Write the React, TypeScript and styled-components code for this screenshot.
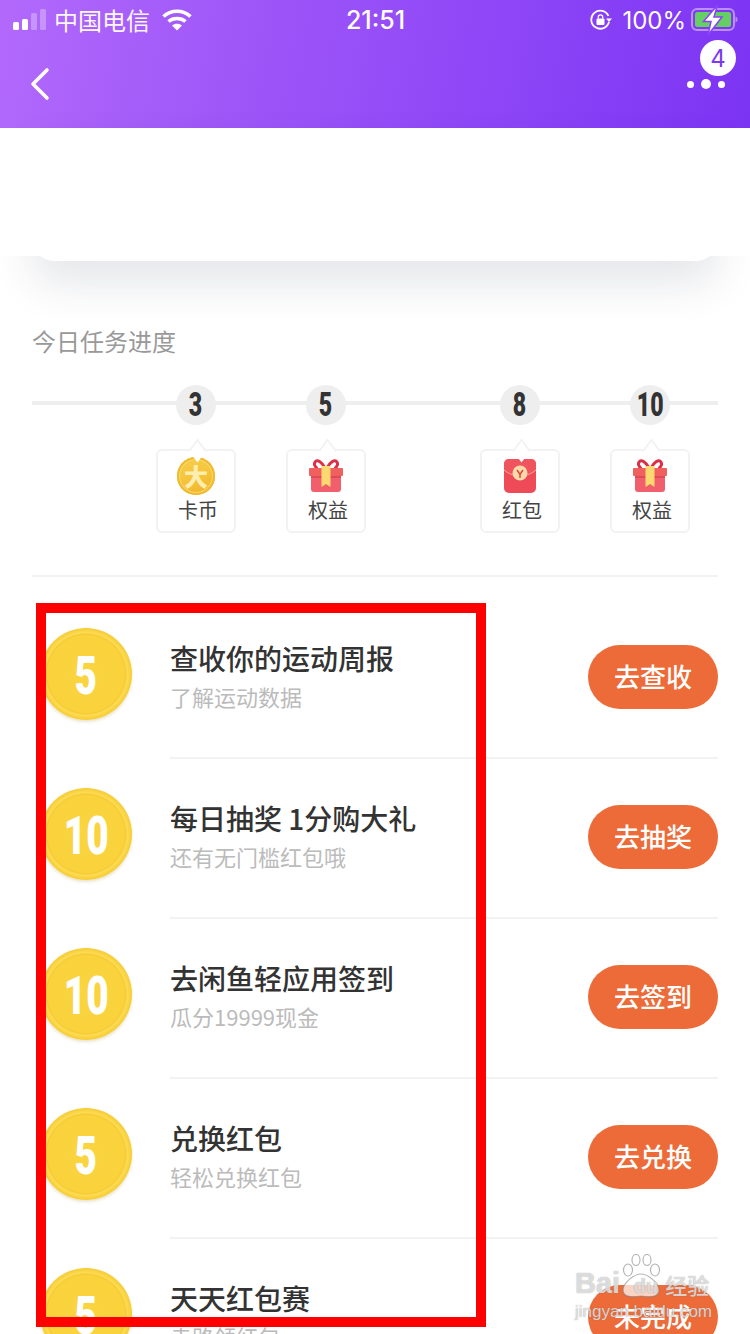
import React from 'react';
import styled, { createGlobalStyle } from 'styled-components';

interface Milestone {
    count: number;
    label: string;
    kind: 'coin' | 'gift' | 'packet';
    offset: number;
}

interface Task {
    points: number;
    title: string;
    desc: string;
    action: string;
}

const milestones: Milestone[] = [
    { count: 3, label: '卡币', kind: 'coin', offset: 124 },
    { count: 5, label: '权益', kind: 'gift', offset: 50 },
    { count: 8, label: '红包', kind: 'packet', offset: 114 },
    { count: 10, label: '权益', kind: 'gift', offset: 50 },
];

const tasks: Task[] = [
    { points: 5, title: '查收你的运动周报', desc: '了解运动数据', action: '去查收' },
    { points: 10, title: '每日抽奖 1分购大礼', desc: '还有无门槛红包哦', action: '去抽奖' },
    { points: 10, title: '去闲鱼轻应用签到', desc: '瓜分19999现金', action: '去签到' },
    { points: 5, title: '兑换红包', desc: '轻松兑换红包', action: '去兑换' },
    { points: 5, title: '天天红包赛', desc: '走路领红包', action: '未完成' },
];

const GlobalStyle = createGlobalStyle`
    html, body {
        margin: 0;
        padding: 0;
        background: #fff;
    }
    * {
        box-sizing: border-box;
    }
`;

const Page = styled.div`
    position: relative;
    width: 750px;
    height: 1334px;
    overflow: hidden;
    background: #fff;
    font-family: 'Noto Sans CJK SC', 'Noto Sans', sans-serif;
`;

const Header = styled.header`
    height: 128px;
    background: linear-gradient(100deg, #b269fb 0%, #9d55f8 35%, #8c44f7 70%, #7c34f3 100%);
    color: #fff;
`;

const StatusBar = styled.div`
    display: grid;
    grid-template-columns: 1fr auto 1fr;
    align-items: center;
    height: 40px;
    padding: 0 12px 0 13px;
    font-size: 24px;
`;

const StatusLeft = styled.div`
    display: flex;
    align-items: center;
`;

const Carrier = styled.span`
    margin-left: 7px;
    line-height: 40px;
    opacity: 0.95;
`;

const WifiIcon = styled.svg`
    margin-left: 12px;
`;

const Clock = styled.span`
    font-family: Inter, 'Liberation Sans', sans-serif;
    font-size: 25px;
    font-weight: 500;
`;

const StatusRight = styled.div`
    display: flex;
    align-items: center;
    justify-content: flex-end;
`;

const Percent = styled.span`
    margin: 0 4px 0 10px;
    font-family: Inter, 'Liberation Sans', sans-serif;
    font-size: 24px;
`;

const NavBar = styled.div`
    display: flex;
    justify-content: space-between;
    height: 88px;
    padding: 0 14px 0 29px;
`;

const BackIcon = styled.svg`
    margin-top: 27px;
`;

const MoreButton = styled.div`
    display: flex;
    flex-direction: column;
    align-items: flex-end;
`;

const Badge = styled.span`
    display: flex;
    align-items: center;
    justify-content: center;
    width: 36px;
    height: 36px;
    border-radius: 50%;
    background: #fff;
    color: #7c3aed;
    font-family: Inter, 'Liberation Sans', sans-serif;
    font-size: 24px;
`;

const Dots = styled.div`
    display: flex;
    align-items: center;
    gap: 7px;
    margin: 3px 11px 0 0;
`;

const Dot = styled.i<{ $big?: boolean }>`
    display: block;
    width: ${props => (props.$big ? 10 : 7)}px;
    height: ${props => (props.$big ? 10 : 7)}px;
    border-radius: 50%;
    background: #fff;
`;

const SummaryCard = styled.div`
    position: relative;
    height: 133px;
    margin: 0 32px;
    border-radius: 0 0 22px 22px;
    background: #fff;
    box-shadow: 0 22px 44px rgba(40, 50, 70, 0.12);

    &::before {
        content: '';
        position: absolute;
        top: 0;
        right: -32px;
        bottom: 5px;
        left: -32px;
        background: #fff;
    }
`;

const ProgressSection = styled.section`
    position: relative;
    padding: 63px 32px 0;
`;

const ProgressTitle = styled.h2`
    margin: 0;
    color: #999;
    font-size: 24px;
    font-weight: 400;
    line-height: 34px;
`;

const Track = styled.div`
    display: flex;
    margin-top: 27px;
    padding-bottom: 42px;
    border-bottom: 2px solid #f2f2f2;
    background: linear-gradient(#eee, #eee) 0 16px / 100% 4px no-repeat;
`;

const Step = styled.div<{ $offset: number }>`
    display: flex;
    flex-direction: column;
    align-items: center;
    width: 80px;
    margin-left: ${props => props.$offset}px;
`;

const StepCount = styled.span`
    display: flex;
    align-items: center;
    justify-content: center;
    width: 40px;
    height: 40px;
    border-radius: 50%;
    background: #eee;
    color: #333;
    font-family: Roboto, 'Liberation Sans', sans-serif;
    font-size: 33px;
    font-weight: 900;
`;

const CountDigits = styled.span`
    display: block;
    margin-top: -2px;
    transform: scaleX(0.7);
`;

const RewardBox = styled.div`
    position: relative;
    display: flex;
    flex-direction: column;
    align-items: center;
    width: 80px;
    height: 84px;
    margin-top: 24px;
    padding-top: 6px;
    border: 2px solid #f2f2f2;
    border-radius: 6px;
    background: #fff;

    &::before {
        content: '';
        position: absolute;
        top: -8px;
        left: 32px;
        width: 13px;
        height: 13px;
        border-top: 2px solid #f2f2f2;
        border-left: 2px solid #f2f2f2;
        background: #fff;
        transform: rotate(45deg) skew(8deg, 8deg);
    }
`;

const RewardIcon = styled.div`
    display: flex;
    align-items: center;
    justify-content: center;
    height: 38px;
`;

const RewardLabel = styled.span`
    margin: 1px 0 0 4px;
    color: #444;
    font-size: 20px;
    line-height: 28px;
`;

const GoldCoin = styled.span`
    display: flex;
    align-items: center;
    justify-content: center;
    width: 38px;
    height: 38px;
    border-radius: 50%;
    background: linear-gradient(160deg, #f7d04e 0%, #f5c33a 55%, #eeb02a 100%);
    box-shadow: inset 0 0 0 2px #f0b92f, inset 0 0 0 3px #f9d968;
    color: #fdeeb0;
    font-size: 24px;
    font-weight: 900;
    line-height: 1;
`;

const TaskList = styled.div`
    margin-top: 22px;
`;

const TaskRow = styled.div`
    display: flex;
    height: 160px;
    padding-left: 40px;
`;

const PointCoin = styled.div`
    display: flex;
    flex: none;
    align-items: center;
    justify-content: center;
    width: 92px;
    height: 92px;
    margin: 29px 38px 0 0;
    border-radius: 50%;
    background: radial-gradient(closest-side, #fad53f 0%, #f9d23c 84%, #f6ca34 86%, #fcdc55 90%, #f9d340 95%, #f6ca36 100%);
    box-shadow: 0 2px 3px rgba(150, 120, 20, 0.2);
    color: #fff;
    font-family: Roboto, 'Liberation Sans', sans-serif;
    font-size: 54px;
    font-weight: 900;
`;

const CoinDigits = styled.span`
    display: block;
    margin-top: 2px;
    transform: scaleX(0.72);
`;

const TaskBody = styled.div`
    display: flex;
    flex: 1;
    align-items: center;
    justify-content: space-between;
    height: 160px;
    margin-right: 32px;
    padding-bottom: 2px;
    border-bottom: 2px solid #f2f2f2;
`;

const TaskText = styled.div`
    display: flex;
    flex-direction: column;
    margin-top: -2px;
`;

const TaskTitle = styled.span`
    color: #333;
    font-size: 28px;
    font-weight: 500;
    line-height: 39px;
`;

const TaskDesc = styled.span`
    color: #bbb;
    font-size: 22px;
    line-height: 36px;
`;

const ActionButton = styled.button`
    width: 130px;
    height: 64px;
    padding: 0 0 3px;
    border: 0;
    border-radius: 32px;
    background: #ec6b38;
    color: #fff;
    font-family: inherit;
    font-size: 26px;
    font-weight: 500;
`;

const RedFrame = styled.div`
    position: absolute;
    top: 603px;
    left: 36px;
    width: 450px;
    height: 724px;
    border: 10px solid #f00;
    pointer-events: none;
`;

const Watermark = styled.div`
    position: absolute;
    top: 1254px;
    left: 575px;
    width: 140px;
    color: rgba(255, 255, 255, 0.7);
    text-shadow: 0 0 1px rgba(110, 110, 110, 0.8);
    pointer-events: none;
`;

const MarkTop = styled.div`
    display: flex;
    align-items: flex-end;
    height: 44px;
    font-family: 'Liberation Sans', sans-serif;
    font-size: 29px;
    font-weight: 700;
    line-height: 30px;
`;

const MarkPawWrap = styled.span`
    position: relative;
    display: block;
    width: 44px;
    height: 44px;
    margin-left: -1px;
`;

const MarkDu = styled.span`
    position: absolute;
    right: 5px;
    bottom: 2px;
    font-size: 20px;
    line-height: 20px;
`;

const MarkCn = styled.span`
    margin: 0 0 -1px 2px;
    font-family: 'Noto Sans CJK SC', sans-serif;
    font-size: 22px;
    font-weight: 500;
    line-height: 30px;
`;

const MarkUrl = styled.div`
    margin-top: 3px;
    font-family: 'Liberation Sans', sans-serif;
    font-size: 17px;
    line-height: 22px;
    white-space: nowrap;
`;

const SignalIcon = () => (
    <svg width="34" height="24" viewBox="0 0 34 24">
        <rect x="0" y="14" width="6" height="8" rx="1.5" fill="#fff" />
        <rect x="9" y="11" width="6" height="11" rx="1.5" fill="#fff" />
        <rect x="18" y="5" width="6" height="17" rx="1.5" fill="#fff" opacity="0.3" />
        <rect x="27" y="1" width="6" height="21" rx="1.5" fill="#fff" opacity="0.3" />
    </svg>
);

const Wifi = () => (
    <WifiIcon width="30" height="24" viewBox="0 0 30 24" fill="none" stroke="#fff" strokeWidth="3.6">
        <path d="M1.5 8.5C9 1.5 21 1.5 28.5 8.500" />
        <path d="M6.5 13.5C11 9.5 19 9.5 23.5 13.500" />
        <path d="M15 22.500l-5-5c2.800-2.200 7.200-2.200 10 0z" fill="#fff" stroke="none" />
    </WifiIcon>
);

const RotationLock = () => (
    <svg width="22" height="22" viewBox="0 0 22 22" fill="none">
        <path d="M18.500 7A9 9 0 1 0 19 13" stroke="#fff" strokeWidth="1.8" />
        <path d="M16 9.500h6l-3 3.500z" fill="#fff" />
        <rect x="6.500" y="9.500" width="8" height="6.500" rx="1" fill="#fff" />
        <path d="M8.300 9.500V8a2.200 2.200 0 0 1 4.400 0v1.500" stroke="#fff" strokeWidth="1.300" />
    </svg>
);

const Battery = () => (
    <svg width="48" height="32" viewBox="0 0 48 32" fill="none">
        <rect x="2" y="5" width="42" height="21" rx="5" stroke="#fff" strokeOpacity="0.45" strokeWidth="2" />
        <rect x="5" y="8" width="36" height="15" rx="2.500" fill="#65cf63" />
        <path d="M45.500 12.500c1.500.4 2 1.800 2 3s-.5 2.600-2 3z" fill="#fff" fillOpacity="0.45" />
        <path d="M27.500 1L13.500 17.500h7.500l-3 13.500L32 13h-8z" fill="#fff" stroke="#8a42f7" strokeWidth="1.500" />
    </svg>
);

const Gift = () => (
    <svg width="36" height="34" viewBox="0 0 36 34">
        <path d="M17 9C14 3 9.500 .500 7.500 2.500 5.500 4.500 6.500 8 9.500 9.500M19 9C22 3 26.500 .500 28.500 2.500 30.500 4.500 29.500 8 26.500 9.500" fill="none" stroke="#dc2f48" strokeWidth="3" />
        <rect x="1" y="9" width="34" height="8" rx="1" fill="#f0605e" />
        <rect x="3" y="17" width="30" height="16" rx="3" fill="#f25f6c" />
        <rect x="3" y="17" width="30" height="2" fill="#e04a56" />
        <path d="M13.500 7h9v21l-4.500-3-4.500 3z" fill="#fbd970" />
    </svg>
);

const Packet = () => (
    <svg width="32" height="34" viewBox="0 0 32 34">
        <rect x="0" y="0" width="32" height="34" rx="5" fill="#ee4a57" />
        <path d="M0 5a5 5 0 0 1 5-5h22a5 5 0 0 1 5 5v6c-5 4-10 6-16 6S5 15 0 11z" fill="#f0555f" />
        <path d="M0 11c5 4 10 6 16 6s11-2 16-6" fill="none" stroke="#f9a8a0" strokeWidth="1" />
        <circle cx="16" cy="14" r="7.500" fill="#fbd9a8" />
        <path d="M13 11l3 4.500 3-4.500M16 15.500V19" fill="none" stroke="#d9483f" strokeWidth="1.500" />
    </svg>
);

const Paw = () => (
    <svg width="44" height="44" viewBox="0 0 44 44" fill="rgba(255,255,255,0.7)" stroke="rgba(120,120,120,0.55)" strokeWidth="1.200">
        <ellipse cx="9" cy="16" rx="4.500" ry="6" />
        <ellipse cx="17" cy="6" rx="4" ry="5.500" />
        <ellipse cx="28" cy="6" rx="4" ry="5.500" />
        <ellipse cx="36" cy="16" rx="4.500" ry="6" />
        <path d="M4 36c0-7 11-16 18-16s18 9 18 16c0 8-10 7-18 6-8 1-18 2-18-6z" />
    </svg>
);

const renderReward = (kind: Milestone['kind']) => {
    if (kind === 'coin') {
        return <GoldCoin>大</GoldCoin>;
    }
    return kind === 'gift' ? <Gift /> : <Packet />;
};

const App = () => (
    <Page>
        <GlobalStyle />
        <Header>
            <StatusBar>
                <StatusLeft>
                    <SignalIcon />
                    <Carrier>中国电信</Carrier>
                    <Wifi />
                </StatusLeft>
                <Clock>21:51</Clock>
                <StatusRight>
                    <RotationLock />
                    <Percent>100%</Percent>
                    <Battery />
                </StatusRight>
            </StatusBar>
            <NavBar>
                <BackIcon width="22" height="34" viewBox="0 0 22 34" fill="none" stroke="#fff" strokeWidth="3.600" strokeLinecap="round" strokeLinejoin="round">
                    <path d="M18 3L4 17l14 14" />
                </BackIcon>
                <MoreButton>
                    <Badge>4</Badge>
                    <Dots>
                        <Dot />
                        <Dot $big={true} />
                        <Dot />
                    </Dots>
                </MoreButton>
            </NavBar>
        </Header>
        <SummaryCard />
        <ProgressSection>
            <ProgressTitle>今日任务进度</ProgressTitle>
            <Track>
                {milestones.map(item => (
                    <Step key={item.count} $offset={item.offset}>
                        <StepCount>
                            <CountDigits>{item.count}</CountDigits>
                        </StepCount>
                        <RewardBox>
                            <RewardIcon>{renderReward(item.kind)}</RewardIcon>
                            <RewardLabel>{item.label}</RewardLabel>
                        </RewardBox>
                    </Step>
                ))}
            </Track>
        </ProgressSection>
        <TaskList>
            {tasks.map(task => (
                <TaskRow key={task.title}>
                    <PointCoin>
                        <CoinDigits>{task.points}</CoinDigits>
                    </PointCoin>
                    <TaskBody>
                        <TaskText>
                            <TaskTitle>{task.title}</TaskTitle>
                            <TaskDesc>{task.desc}</TaskDesc>
                        </TaskText>
                        <ActionButton>{task.action}</ActionButton>
                    </TaskBody>
                </TaskRow>
            ))}
        </TaskList>
        <RedFrame />
        <Watermark>
            <MarkTop>
                Bai
                <MarkPawWrap>
                    <Paw />
                    <MarkDu>du</MarkDu>
                </MarkPawWrap>
                <MarkCn>经验</MarkCn>
            </MarkTop>
            <MarkUrl>jingyan.baidu.com</MarkUrl>
        </Watermark>
    </Page>
);

export default App;
